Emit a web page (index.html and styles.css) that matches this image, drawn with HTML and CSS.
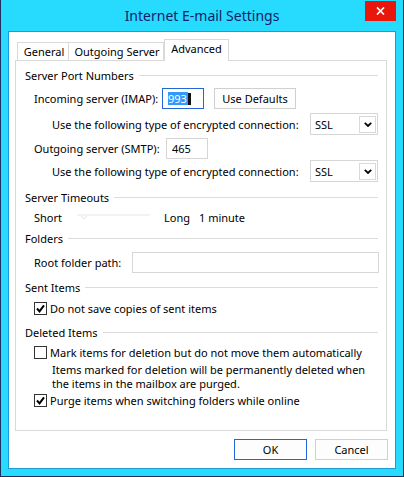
FILE: index.html
```html
<!DOCTYPE html>
<html lang="en">
<head>
  <meta charset="UTF-8" />
  <title>Internet E-mail Settings</title>
  <link rel="stylesheet" href="styles.css">
</head>
<body>
  <div class="window">
    <div class="titlebar">
      <span class="title">Internet E-mail Settings</span>
      <button class="close" type="button">
        <svg width="9" height="8" viewBox="0 0 9 8"><path d="M1 0.5 L8 7.5 M8 0.5 L1 7.5" stroke="#fff" stroke-width="1.7" fill="none"/></svg>
      </button>
    </div>

    <div class="client">
      <div class="tabs">
        <div class="tab tab-general">General</div>
        <div class="tab tab-outgoing">Outgoing Server</div>
        <div class="tab tab-advanced active">Advanced</div>
      </div>

      <div class="panel">
        <div class="group-title">Server Port Numbers</div>

        <div class="row row-input">
          <span class="label lbl-imap">Incoming server (IMAP):</span>
          <div class="textbox port focused"><span class="sel">993</span><span class="caret"></span></div>
          <button class="btn btn-defaults" type="button">Use Defaults</button>
        </div>
        <div class="row row-select enc-1">
          <span class="label lbl-enc">Use the following type of encrypted connection:</span>
          <div class="select">
            <span>SSL</span>
            <span class="drop"><svg width="8" height="5" viewBox="0 0 8 5"><path d="M0.8 0.8 L4 4 L7.2 0.8" stroke="#000" stroke-width="1.8" fill="none"/></svg></span>
          </div>
        </div>
        <div class="row row-input out">
          <span class="label lbl-smtp">Outgoing server (SMTP):</span>
          <div class="textbox port">465</div>
        </div>
        <div class="row row-select enc-2">
          <span class="label lbl-enc">Use the following type of encrypted connection:</span>
          <div class="select">
            <span>SSL</span>
            <span class="drop"><svg width="8" height="5" viewBox="0 0 8 5"><path d="M0.8 0.8 L4 4 L7.2 0.8" stroke="#000" stroke-width="1.8" fill="none"/></svg></span>
          </div>
        </div>

        <div class="group-title gt-timeouts">Server Timeouts</div>
        <div class="row row-text slider-row">
          <span class="label lbl-short">Short</span>
          <svg class="slider" width="73" height="10" viewBox="0 0 73 10">
            <rect x="0" y="1" width="73" height="2" fill="#f3f3f3"/>
            <path d="M4 3 L7 6 L10 3" stroke="#e2e2e2" fill="none"/>
          </svg>
          <span class="label lbl-long">Long</span>
          <span>1 minute</span>
        </div>

        <div class="group-title gt-folders">Folders</div>
        <div class="row row-input root">
          <span class="label lbl-root">Root folder path:</span>
          <div class="textbox wide"></div>
        </div>

        <div class="group-title gt-sent">Sent Items</div>
        <div class="row row-text check check-1">
          <svg class="box" width="13" height="13" viewBox="0 0 13 13"><rect x="0.5" y="0.5" width="12" height="12" fill="#fff" stroke="#333"/><path d="M3 6.5 L5.5 9.3 L10 3.3" stroke="#000" stroke-width="2" fill="none"/></svg>
          <span>Do not save copies of sent items</span>
        </div>

        <div class="group-title gt-deleted">Deleted Items</div>
        <div class="row row-text check check-2">
          <svg class="box" width="13" height="13" viewBox="0 0 13 13"><rect x="0.5" y="0.5" width="12" height="12" fill="#fff" stroke="#333"/></svg>
          <span>Mark items for deletion but do not move them automatically</span>
        </div>
        <p class="note">Items marked for deletion will be permanently deleted when<br>the items in the mailbox are purged.</p>
        <div class="row row-text check check-3">
          <svg class="box" width="13" height="13" viewBox="0 0 13 13"><rect x="0.5" y="0.5" width="12" height="12" fill="#fff" stroke="#333"/><path d="M3 6.5 L5.5 9.3 L10 3.3" stroke="#000" stroke-width="2" fill="none"/></svg>
          <span>Purge items when switching folders while online</span>
        </div>
      </div>

      <div class="actions">
        <button class="btn default" type="button">OK</button>
        <button class="btn" type="button">Cancel</button>
      </div>
    </div>
  </div>
</body>
</html>
```

FILE: styles.css
```css
* { box-sizing: border-box; }
body { margin: 0; font-family: "Noto Sans", sans-serif; font-size: 11px; color: #000; }

/* window frame */
.window { width: 404px; height: 477px; background: #27dbfe; border: 1px solid #1f2f5e; border-top: none; display: flex; flex-direction: column; }
.titlebar { height: 31px; flex: none; display: grid; grid-template-columns: 1fr auto 1fr; align-items: start; }
.title { grid-column: 2; font-size: 14px; line-height: 31px; color: #16206a; }
.close { grid-column: 3; justify-self: end; width: 31px; height: 20px; margin: 1px 7px 0 0; padding: 0; border: none; background: #e8170c; display: flex; align-items: center; justify-content: center; }
.client { flex: 1; margin: 0 7px 7px; background: #fff; border: 1px solid #1e9ad6; padding: 7px 8px 0 6px; }

/* tabs */
.tabs { display: flex; align-items: flex-end; height: 21px; padding-left: 2px; }
.tab { height: 18px; line-height: 17px; text-align: center; background: #fff; border: 1px solid #d9d9d9; border-bottom: none; white-space: nowrap; }
.tab-general { width: 52px; padding-left: 2px; }
.tab-outgoing { width: 95px; border-left: none; padding-left: 2px; }
.tab-advanced { width: 65px; }
.tab.active { height: 22px; line-height: 18px; margin-bottom: -1px; position: relative; z-index: 1; }

.panel { height: 371px; border: 1px solid #d9d9d9; padding: 6px 8px 0 9px; }

/* group headings with the rule to the right */
.group-title { display: flex; align-items: center; height: 16px; white-space: nowrap; }
.group-title::after { content: ""; flex: 1; height: 1px; background: #dcdcdc; margin-left: 5px; }
.gt-timeouts { margin-top: 7px; }
.gt-folders { margin-top: 5px; }
.gt-sent { margin-top: 6px; }
.gt-deleted { margin-top: 8px; }

.row { display: flex; align-items: center; padding-left: 9px; white-space: nowrap; }
.row-input { height: 21px; margin-top: 5px; }
.row-select { height: 22px; padding-left: 27px; }
.row-text { height: 16px; }
.enc-1 { margin-top: 4px; }
.out { margin-top: 3px; }
.enc-2 { margin-top: 1px; }
.slider-row { margin-top: 4px; }
.root { margin-top: 6px; }
.check-1 { margin-top: 5px; }
.check-2 { margin-top: 4px; }
.check-3 { margin-top: 1px; }

.label { flex: none; }
.lbl-imap { width: 128px; }
.lbl-smtp { width: 132px; }
.lbl-enc { width: 258px; }
.lbl-root { width: 98px; }
.lbl-short { width: 43px; }
.lbl-long { width: 35px; }
.slider { margin-right: 14px; margin-top: 2px; }

/* fields */
.textbox { height: 21px; border: 1px solid #d6d6d6; background: #fff; padding-left: 5px; line-height: 19px; display: flex; align-items: center; }
.port { width: 42px; }
.wide { flex: 1; margin-right: -1px; }
.focused { border-color: #2466d8; }
.sel { background: #3399ff; color: #fff; line-height: 13px; padding-right: 1px; }
.caret { width: 3px; height: 12px; background: #111; }

.select { width: 68px; height: 22px; border: 1px solid #d6d6d6; display: flex; align-items: center; justify-content: space-between; padding: 0 1px 0 4px; }
.drop { width: 17px; height: 17px; border: 1px solid #d9d9d9; display: flex; align-items: center; justify-content: center; }

.btn { font: inherit; color: #000; background: #fdfdfd; border: 1px solid #d0d0d0; height: 21px; padding: 0; }
.btn-defaults { width: 82px; margin-left: 10px; }
.btn.default { border-color: #2466d8; }

.check .box { flex: none; margin-right: 3px; }
.note { margin: 3px 0 0; padding-left: 27px; line-height: 14px; white-space: nowrap; }

.actions { display: flex; justify-content: flex-end; gap: 8px; margin: 8px -1px 0 0; }
.actions .btn { width: 73px; }
```
